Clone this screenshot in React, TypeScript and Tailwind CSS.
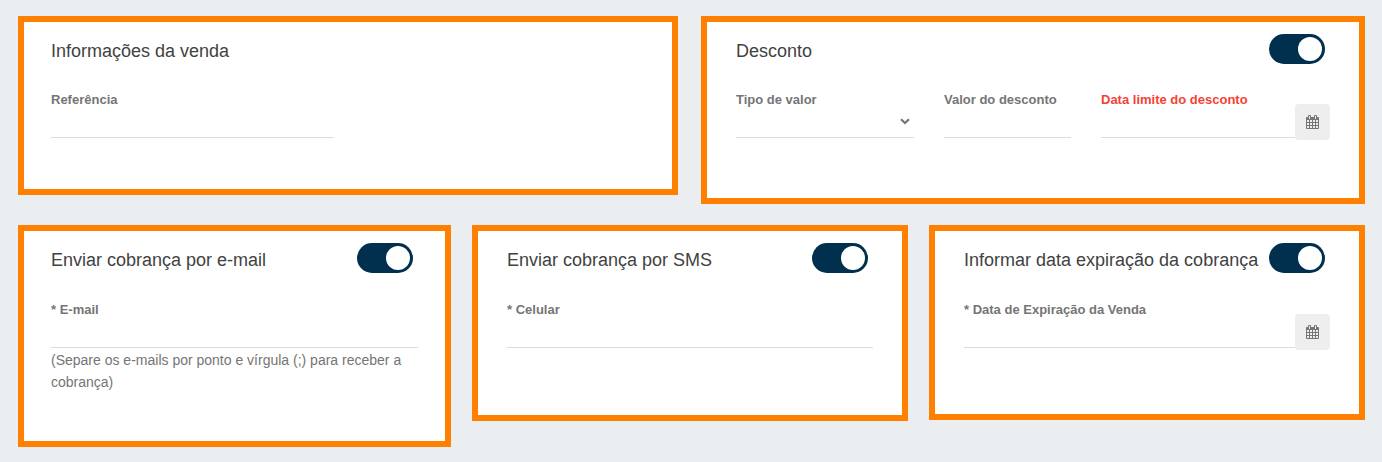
import { useState, type ReactNode } from "react";

function CalendarIcon() {
  return (
    <svg viewBox="0 0 13 14" className="h-[14px] w-[13px]" aria-hidden="true">
      <path fill="#757575" d="M1 2h11q1 0 1 1v10q0 1-1 1H1q-1 0-1-1V3q0-1 1-1z" />
      <path fill="#757575" d="M2 1q0-1 1-1h1q1 0 1 1v2H2zM8 1q0-1 1-1h1q1 0 1 1v2H8z" />
      <path fill="#eeeeee" d="M3 1h1v3H3zM9 1h1v3H9z" />
      <path
        fill="#eeeeee"
        d="M1 5h2v2H1zM4 5h2v2H4zM7 5h2v2H7zM10 5h2v2h-2zM1 8h2v2H1zM4 8h2v2H4zM7 8h2v2H7zM10 8h2v2h-2zM1 11h2v2H1zM4 11h2v2H4zM7 11h2v2H7zM10 11h2v2h-2z"
      />
    </svg>
  );
}

function Toggle({ labelledBy }: { labelledBy: string }) {
  const [on, setOn] = useState(true);
  return (
    <input
      type="checkbox"
      role="switch"
      aria-labelledby={labelledBy}
      checked={on}
      onChange={(e) => setOn(e.target.checked)}
      className="flex h-[30px] w-14 shrink-0 cursor-pointer appearance-none items-center rounded-full bg-[#b5b5b5] p-[3px] before:block before:size-6 before:rounded-full before:bg-white checked:justify-end checked:bg-[#00304d]"
    />
  );
}

type CardProps = {
  id: string;
  title: string;
  toggle?: boolean;
  className: string;
  children: ReactNode;
};

function Card({ id, title, toggle, className, children }: CardProps) {
  return (
    <section
      aria-labelledby={id}
      className={`flex min-w-0 flex-col border-[6px] border-[#ff8000] bg-white ${className}`}
    >
      <header className="flex items-start justify-between pr-[5px]">
        <h2 id={id} className="text-[18px] leading-[34px] whitespace-nowrap text-[#424242]">
          {title}
        </h2>
        {toggle && <Toggle labelledBy={id} />}
      </header>
      {children}
    </section>
  );
}

type LabelProps = { htmlFor: string; required?: boolean; error?: boolean; children: ReactNode };

function Label({ htmlFor, required, error, children }: LabelProps) {
  return (
    <label
      htmlFor={htmlFor}
      className={`text-[13px] leading-5 font-bold whitespace-nowrap ${error ? "text-[#f44336]" : "text-[#757575]"}`}
    >
      {required && <span>* </span>}
      {children}
    </label>
  );
}

const control =
  "h-7 w-full min-w-0 appearance-none border-b border-[#dcdcdc] bg-transparent text-[14px] text-[#424242] outline-none";

type FieldProps = { id: string; label: string; type?: string; required?: boolean; error?: boolean };

function TextField({ id, label, type = "text", required, error }: FieldProps) {
  return (
    <div className="flex min-w-0 flex-1 flex-col">
      <Label htmlFor={id} required={required} error={error}>
        {label}
      </Label>
      <input id={id} type={type} required={required} className={control} />
    </div>
  );
}

function DateField(props: FieldProps) {
  return (
    <div className="flex min-w-0 items-end">
      <div className="flex min-w-0 flex-1 pb-[2px]">
        <TextField {...props} />
      </div>
      <button
        type="button"
        aria-label="Abrir calendário"
        className="flex h-9 w-[35px] shrink-0 cursor-pointer items-center justify-center rounded bg-[#eeeeee]"
      >
        <CalendarIcon />
      </button>
    </div>
  );
}

function SelectField({ id, label }: FieldProps) {
  return (
    <div className="flex min-w-0 flex-col">
      <Label htmlFor={id}>{label}</Label>
      <div className="grid items-start">
        <select id={id} defaultValue="" className={`col-start-1 row-start-1 ${control}`}>
          <option value=""></option>
          <option value="percentual">Percentual</option>
          <option value="fixo">Valor fixo</option>
        </select>
        <svg
          viewBox="0 0 10 7"
          className="pointer-events-none col-start-1 row-start-1 mt-2 mr-1 h-[7px] w-[10px] justify-self-end"
          fill="none"
          stroke="#757575"
          strokeWidth="2.2"
          aria-hidden="true"
        >
          <path d="M1 1.2 5 5l4-3.8" />
        </svg>
      </div>
    </div>
  );
}

export default function App() {
  return (
    <main className="flex min-h-screen flex-col gap-[21px] bg-[#eaeef1] pt-4 pr-[17px] pb-4 pl-[18px] font-['Liberation_Sans',Arial,sans-serif]">
      <div className="grid grid-cols-[660fr_664fr] items-start gap-[23px]">
        <Card id="venda" title="Informações da venda" className="gap-[22px] px-[27px] pt-3 pb-[51px]">
          <div className="grid grid-cols-2 gap-7">
            <TextField id="referencia" label="Referência" />
          </div>
        </Card>
        <Card id="desconto" title="Desconto" toggle className="gap-[22px] px-[29px] pt-3 pb-[58px]">
          <div className="grid grid-cols-[178fr_127fr_229fr] gap-[30px]">
            <SelectField id="tipo-valor" label="Tipo de valor" />
            <TextField id="valor-desconto" label="Valor do desconto" />
            <DateField id="data-limite" label="Data limite do desconto" error />
          </div>
        </Card>
      </div>

      <div className="grid grid-cols-[433fr_436fr_436fr] items-start gap-[21px]">
        <Card id="envio-email" title="Enviar cobrança por e-mail" toggle className="gap-[23px] px-[27px] pt-3 pb-[48px]">
          <div className="flex flex-col">
            <TextField id="email" label="E-mail" required />
            <p className="pt-px text-[14px] leading-[22px] text-[#757575]">
              (Separe os e-mails por ponto e vírgula (;) para receber a cobrança)
            </p>
          </div>
        </Card>
        <Card id="envio-sms" title="Enviar cobrança por SMS" toggle className="gap-[23px] px-[29px] pt-3 pb-[67px]">
          <TextField id="celular" label="Celular" type="tel" required />
        </Card>
        <Card id="expiracao" title="Informar data expiração da cobrança" toggle className="gap-[23px] px-[29px] pt-3 pb-[64px]">
          <DateField id="data-expiracao" label="Data de Expiração da Venda" required />
        </Card>
      </div>
    </main>
  );
}
